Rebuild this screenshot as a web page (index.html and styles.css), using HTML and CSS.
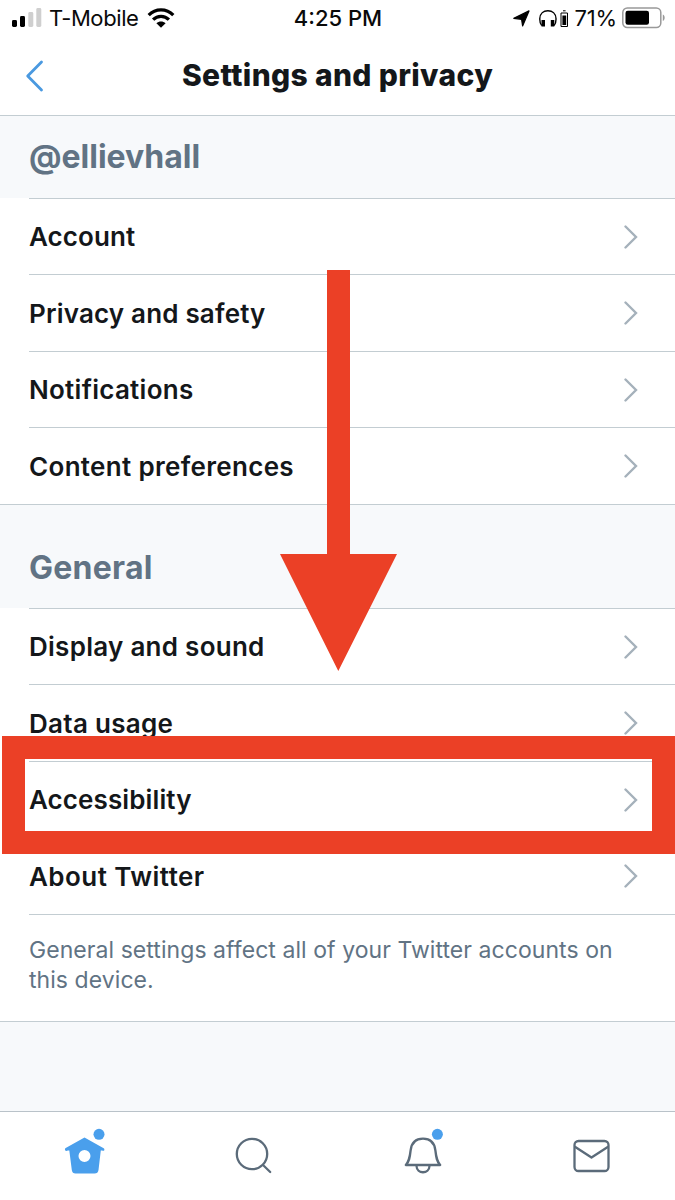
FILE: index.html
```html
<!DOCTYPE html>
<html lang="en">
<head>
<meta charset="utf-8">
<title>Settings and privacy</title>
<link rel="stylesheet" href="styles.css">
</head>
<body>
<main class="phone">
  <div class="status">
    <div class="status-left">
      <svg class="signal" width="30" height="20" viewBox="0 0 30 20"><rect x="0" y="12" width="5" height="7" rx="1.400"/><rect x="8" y="8" width="5" height="11" rx="1.400"/><rect class="off" x="16.300" y="4" width="5" height="15" rx="1.400"/><rect class="off" x="24.300" y="0" width="5" height="19" rx="1.400"/></svg>
      <span class="carrier">T-Mobile</span>
      <svg class="wifi" width="28" height="20" viewBox="0 0 28 20"><path d="M1.700 7.200C8.500 .2 19.500 .2 26.300 7.200M6.100 11.700C10.500 7.200 17.500 7.200 21.900 11.700"/><path class="solid" d="M14 19.700 9.400 15.300C12 13 16 13 18.600 15.300Z"/></svg>
    </div>
    <span class="time">4:25 PM</span>
    <div class="status-right">
      <svg class="location" width="17" height="17" viewBox="0 0 17 17"><path d="M16 .9 9.600 16 8.600 9.300.8 8.300Z"/></svg>
      <svg class="headset" width="30" height="19" viewBox="0 0 30 19"><path d="M2.700 16.500C.8 14.500.7 12 .8 9.500 1 4.500 4.500 1.700 8.900 1.700S16.800 4.500 17 9.500C17.100 12 17 14.500 15.100 16.500"/><path class="solid" d="M2.500 11H6V17.500H2.500ZM11.800 11H15.300V17.500H11.800ZM23.400 6.500H27.200V16H23.400Z"/><path class="cell" d="M22 4H28.500V17.500H22ZM24 1.800H26.600"/></svg>
      <span class="percent">71%</span>
      <svg class="battery" width="43" height="22" viewBox="0 0 43 22"><rect class="shell" x=".8" y="1" width="38" height="19.600" rx="4.500"/><rect x="3.500" y="3.800" width="23.500" height="14" rx="2.300"/><path class="cap" d="M40.800 7.500C43.300 8.500 43.300 13 40.800 14Z"/></svg>
    </div>
  </div>
  <header class="nav">
    <svg class="back" width="20" height="34" viewBox="0 0 20 34"><path d="M17.500 3 3.700 17 17.500 31"/></svg>
    <h1 class="title">Settings and privacy</h1>
  </header>

  <h2 class="section account-head">@ellievhall</h2>
  <ul class="list">
    <li class="row"><span class="w-account">Account</span><svg class="chevron" viewBox="0 0 14 24"><path d="M1.500 1.500 12 12 1.500 22.500"/></svg></li>
    <li class="row"><span class="w-privacy">Privacy and safety</span><svg class="chevron" viewBox="0 0 14 24"><path d="M1.500 1.500 12 12 1.500 22.500"/></svg></li>
    <li class="row"><span class="w-notif">Notifications</span><svg class="chevron" viewBox="0 0 14 24"><path d="M1.500 1.500 12 12 1.500 22.500"/></svg></li>
    <li class="row"><span class="w-content">Content preferences</span><svg class="chevron" viewBox="0 0 14 24"><path d="M1.500 1.500 12 12 1.500 22.500"/></svg></li>
  </ul>
  <h2 class="section general-head">General</h2>
  <ul class="list">
    <li class="row"><span class="w-display">Display and sound</span><svg class="chevron" viewBox="0 0 14 24"><path d="M1.500 1.500 12 12 1.500 22.500"/></svg></li>
    <li class="row"><span class="w-data">Data usage</span><svg class="chevron" viewBox="0 0 14 24"><path d="M1.500 1.500 12 12 1.500 22.500"/></svg></li>
    <li class="row"><span class="w-access">Accessibility</span><svg class="chevron" viewBox="0 0 14 24"><path d="M1.500 1.500 12 12 1.500 22.500"/></svg></li>
    <li class="row"><span class="w-about">About Twitter</span><svg class="chevron" viewBox="0 0 14 24"><path d="M1.500 1.500 12 12 1.500 22.500"/></svg></li>
  </ul>
  <p class="note">General settings affect all of your Twitter accounts on<br>this device.</p>
  <div class="spacer"></div>

  <nav class="tabs">
    <svg class="tab" viewBox="0 0 56 56"><path class="home" fill-rule="evenodd" d="M27.500 9.600 46.700 20.300Q47.700 21 47.300 22.200 46.900 23.300 45 22.500H43.800L41.500 42Q41 45.500 37.500 45.500H18.500Q15.300 45.500 14.800 42L12.300 22.500H11Q8.700 23.500 8 22 7.500 20.700 8.700 20ZM27.500 22A6 6 0 1 0 27.500 34 6 6 0 1 0 27.500 22Z"/><circle class="badge" cx="42" cy="6.300" r="5.500"/></svg>
    <svg class="tab" viewBox="0 0 56 56"><circle class="line" cx="26" cy="26" r="15.200"/><path class="line" d="M37 37 44.200 44"/></svg>
    <svg class="tab" viewBox="0 0 56 56"><path class="line" d="M10.800 37H45.200C41.800 33.500 41.200 29.500 40.400 22.500 39.500 14.500 34.800 10.700 28 10.700S16.500 14.500 15.600 22.500C14.800 29.500 14.200 33.500 10.800 37ZM21.400 37.500C21.800 46.500 34.200 46.500 34.600 37.500"/><circle class="badge" cx="42.400" cy="6.300" r="5.500"/></svg>
    <svg class="tab" viewBox="0 0 56 56"><rect class="line" x="10.500" y="13" width="34" height="30" rx="4"/><path class="line" d="M11.300 19 27.500 29.500 43.700 19"/></svg>
  </nav>

  <svg class="arrow" viewBox="0 0 118 401"><path d="M47 0H70V284H117L58.300 401 0 284H47Z"/></svg>
  <div class="highlight"></div>
</main>
</body>
</html>
```
FILE: styles.css
```css
* { box-sizing: border-box; }
body { margin: 0; background: #fff; font-family: Inter, "Liberation Sans", sans-serif; color: #14171a; }
h1, h2, ul, p { margin: 0; padding: 0; }
svg { display: block; flex: none; }
span { white-space: nowrap; }
.phone { position: relative; width: 675px; height: 1200px; overflow: hidden; display: flex; flex-direction: column; }
.phone > * { flex-shrink: 0; }

.status { height: 36px; display: grid; grid-template-columns: 1fr auto 1fr; align-items: center; padding: 0 10px 0 12px; font-size: 22px; line-height: 36px; color: #0a0a0a; }
.status-left, .status-right { display: flex; align-items: center; }
.status-right { justify-content: flex-end; }
.signal { margin-right: 7px; }
.signal .off { fill: #cfcfcf; }
.carrier { letter-spacing: -.4px; }
.wifi { margin-left: 8px; }
.wifi path { fill: none; stroke: #000; stroke-width: 3.2; }
.wifi .solid { fill: #000; stroke: none; }
.time { font-weight: 500; margin-left: -1px; }
.location { margin-right: 9px; }
.location path { stroke: #000; stroke-width: 1.2; stroke-linejoin: round; }
.headset { margin-right: 6px; }
.headset path { fill: none; stroke: #000; stroke-width: 1.4; }
.headset .cell { stroke-width: 1; }
.headset .solid { fill: #000; stroke: none; }
.percent { letter-spacing: -.2px; }
.battery { margin-left: 5px; }
.battery .shell { fill: none; stroke: #999; stroke-width: 1.5; }
.battery .cap { fill: #999; }

.nav { height: 80px; border-bottom: 1px solid #c3cdd2; display: grid; grid-template-columns: 48px 1fr 48px; align-items: center; }
.back { margin-left: 24px; }
.back path { fill: none; stroke: #4a99e0; stroke-width: 2.8; stroke-linecap: round; stroke-linejoin: round; }
.title { font-size: 30px; line-height: 38px; padding-bottom: 2px; font-weight: 800; letter-spacing: .34px; text-align: center; white-space: nowrap; }

.section { background: #f7f9fb; color: #617384; padding-left: 29px; font-weight: 700; font-size: 32px; }
.account-head { height: 82px; line-height: 82px; }
.general-head { height: 104px; line-height: 125px; border-top: 1px solid #c3cdd2; letter-spacing: .25px; }
.list { list-style: none; padding-left: 29px; }
.row { height: 77px; border-top: 1px solid #c3cdd2; display: flex; align-items: center; justify-content: space-between; padding-right: 37px; font-size: 26px; line-height: 34px; font-weight: 600; }
.row:nth-child(odd) { height: 76px; }
.row span { padding-top: 1px; }
.w-account { letter-spacing: .1px; }
.w-privacy { letter-spacing: .18px; }
.w-notif { letter-spacing: .27px; }
.w-content { letter-spacing: .32px; }
.w-display { letter-spacing: .27px; }
.w-data { letter-spacing: .3px; }
.w-access { letter-spacing: .1px; }
.w-about { letter-spacing: .45px; }
.chevron { width: 14px; height: 24px; }
.chevron path { fill: none; stroke: #a5b1bb; stroke-width: 2.4; stroke-linecap: round; }
.note { height: 107px; margin-left: 29px; padding-top: 21px; border-top: 1px solid #c3cdd2; font-size: 23px; line-height: 29.500px; letter-spacing: .06px; color: #617384; white-space: nowrap; }
.spacer { height: 90px; background: #f7f9fb; border-top: 1px solid #c3cdd2; }

.tabs { height: 89px; border-top: 1px solid #b9c2c9; display: grid; grid-template-columns: repeat(4, 169px); padding-top: 16px; justify-items: center; justify-content: start; }
.tab { width: 56px; height: 56px; overflow: visible; }
.line { fill: none; stroke: #5b6b7a; stroke-width: 2.3; stroke-linecap: round; stroke-linejoin: round; }
.home, .badge { fill: #4a9fec; }

.arrow { position: absolute; left: 280px; top: 270px; width: 118px; height: 401px; fill: #eb4026; }
.highlight { position: absolute; left: 2px; top: 736px; width: 673px; height: 118px; border: 23px solid #eb4026; }
```
